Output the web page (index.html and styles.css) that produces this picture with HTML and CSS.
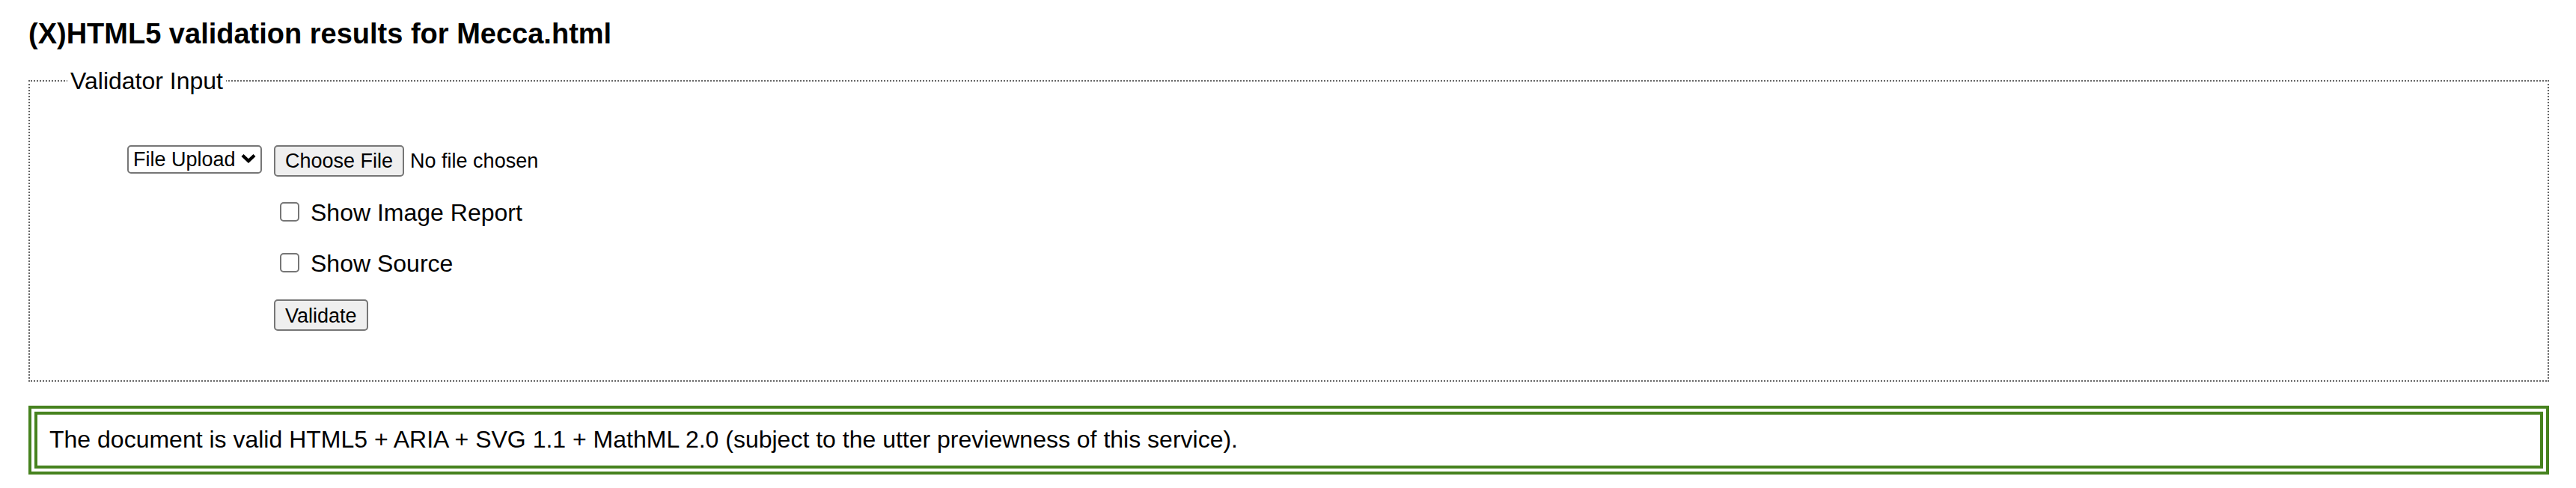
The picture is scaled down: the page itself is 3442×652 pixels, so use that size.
FILE: index.html
```html
<!DOCTYPE html>
<html lang="en">
<head>
<meta charset="utf-8">
<title>(X)HTML5 validation results for Mecca.html</title>
<link rel="stylesheet" href="styles.css">
</head>
<body>
<h1 class="title">(X)HTML5 validation results for Mecca.html</h1>
<form class="form">
  <fieldset class="panel">
    <legend class="legend">Validator Input</legend>
    <div class="source">
      <span class="picker">
        <select class="select" aria-label="Input method">
          <option>File Upload</option>
        </select>
        <svg class="arrow" viewBox="0 0 20 14" aria-hidden="true"><path d="M2 2.5 L10 10 L18 2.5" fill="none" stroke="#000" stroke-width="4.4"/></svg>
      </span>
      <input class="file" type="file" aria-label="Document file">
    </div>
    <div class="options">
      <label class="option"><input class="check" type="checkbox">Show Image Report</label>
      <label class="option"><input class="check" type="checkbox">Show Source</label>
      <button class="button" type="button">Validate</button>
    </div>
  </fieldset>
</form>
<p class="success">The document is valid HTML5 + ARIA + SVG 1.1 + MathML 2.0 (subject to the utter previewness of this service).</p>
</body>
</html>
```
FILE: styles.css
```css
* {
  box-sizing: border-box;
}

body {
  margin: 21px 36px 18px 38px;
  background: #fff;
  color: #000;
  font: 32px/36px "Liberation Sans", Arial, sans-serif;
}

.title {
  margin: 0 0 21px;
  font-size: 38px;
  line-height: 48px;
}

.panel {
  margin: 0;
  padding: 68px 130px 66px;
  border: 2px dotted #666;
}

.legend {
  margin-left: -80px;
  padding: 0 4px;
}

.source {
  display: flex;
  align-items: flex-start;
  gap: 16px;
}

.picker {
  position: relative;
  width: 180px;
}

.select,
.button,
.file {
  font: 27px/32px "Liberation Sans", Arial, sans-serif;
  color: #000;
}

.select {
  display: block;
  appearance: none;
  width: 100%;
  height: 38px;
  padding: 0 6px;
  border: 2px solid #767676;
  border-radius: 5px;
  background: #fff;
}

.arrow {
  position: absolute;
  top: 11px;
  right: 8px;
  width: 20px;
  height: 14px;
  pointer-events: none;
}

.file {
  height: 42px;
}

.button,
.file::file-selector-button {
  height: 42px;
  margin: 0;
  padding: 2px 13px;
  border: 2px solid #767676;
  border-radius: 5px;
  background: #efefef;
  color: #000;
  font: inherit;
}

.file::file-selector-button {
  margin-right: 8px;
}

.button {
  margin-top: 30px;
  font-size: 27px;
}

.options {
  display: flex;
  flex-direction: column;
  align-items: flex-start;
  margin: 30px 0 0 196px;
}

.option {
  display: flex;
  align-items: flex-start;
  gap: 15px;
  padding-left: 8px;
}

.option + .option {
  margin-top: 32px;
}

.check {
  appearance: none;
  width: 26px;
  height: 26px;
  margin: 4px 0 0;
  border: 2px solid #767676;
  border-radius: 5px;
  background: #fff;
}

.success {
  margin: 32px 0 0;
  padding: 15px 16px 17px;
  border: 12px double #46821e;
}
```
